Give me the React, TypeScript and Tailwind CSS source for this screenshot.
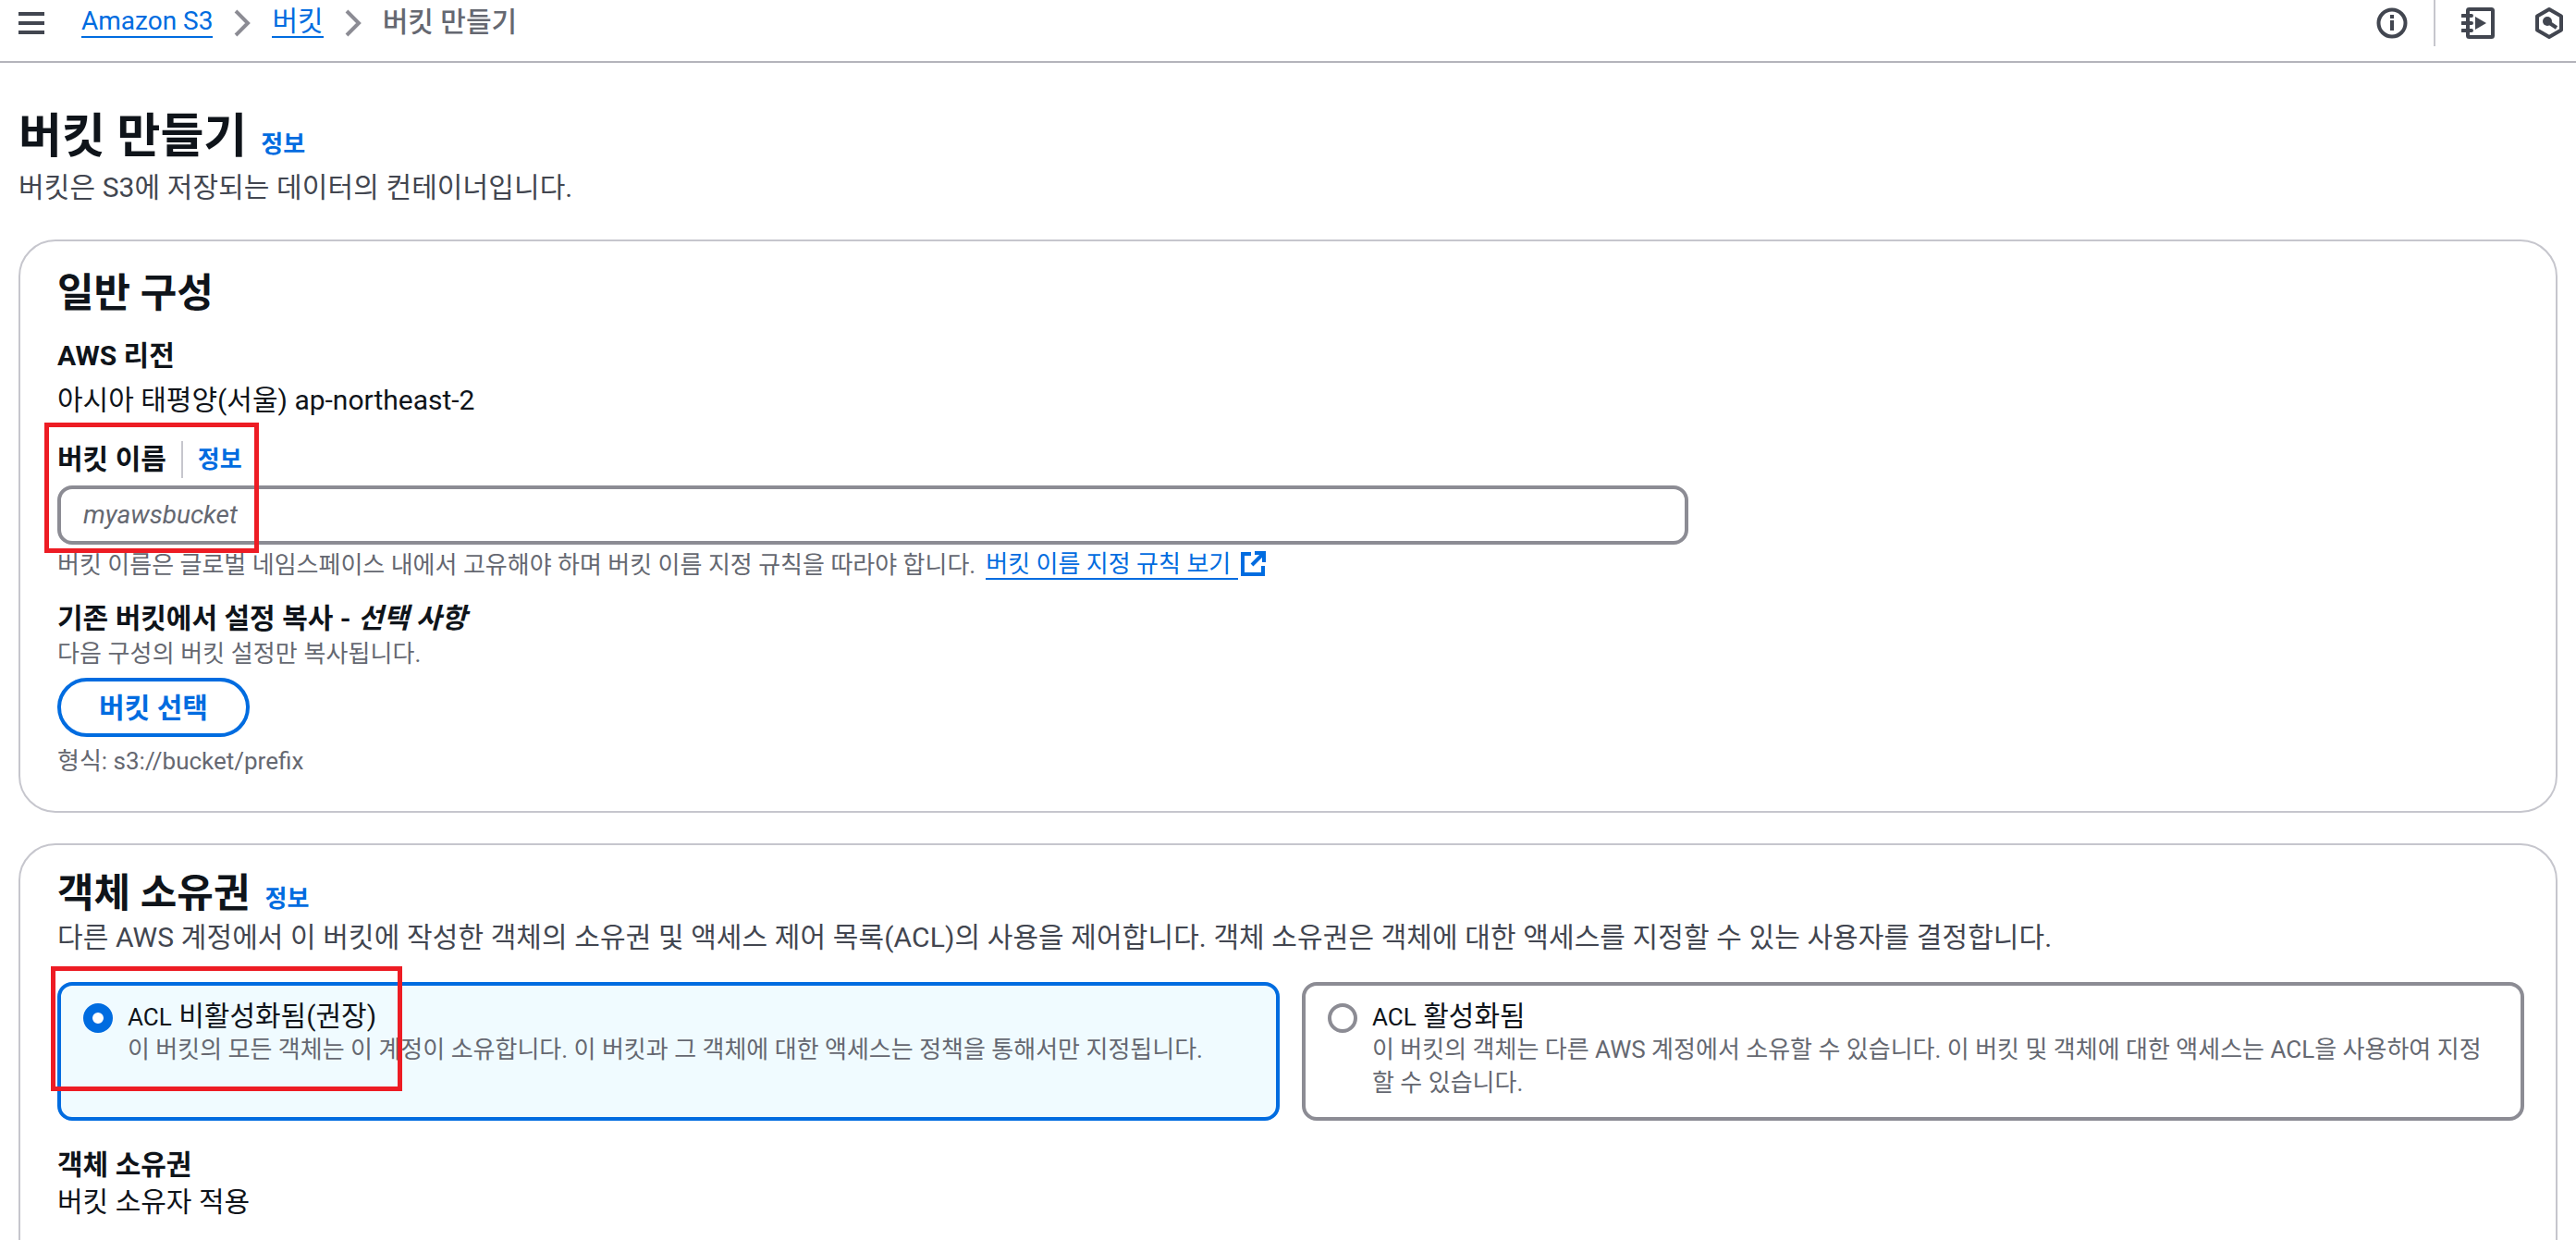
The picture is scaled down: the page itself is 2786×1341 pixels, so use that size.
import React from "react";

const FONT = { fontFamily: 'Roboto, "Noto Sans CJK KR", sans-serif' };

const Chevron = () => (
    <svg width="20" height="32" viewBox="0 0 20 32" className="shrink-0">
        <path d="M3 3l13 13-13 13" fill="none" stroke="#8c8c94" strokeWidth="4" />
    </svg>
);

const Info = ({ className = "" }: { className?: string }) => (
    <span className={`font-bold text-[#006ce0] ${className}`}>정보</span>
);

const RedBox = ({ className }: { className: string }) => (
    <div className={`absolute border-[5px] border-[#ed1c24] pointer-events-none ${className}`} />
);

const TopBar = () => (
    <header className="h-[68px] shrink-0 flex items-start border-b-2 border-[#b4b4bb]">
        <svg width="28" height="24" viewBox="0 0 28 24" className="ml-5 mt-[13px] shrink-0">
            <path d="M0 2h28M0 12h28M0 22h28" stroke="#424650" strokeWidth="4" />
        </svg>
        <nav className="ml-10 flex items-center h-[50px] text-[30px] leading-[36px]">
            <a className="text-[28px] text-[#006ce0] border-b-2 border-[#006ce0] leading-[32px] mt-[-3px]">Amazon S3</a>
            <span className="mx-[22px]"><Chevron /></span>
            <a className="text-[#006ce0] border-b-2 border-[#006ce0] leading-[32px] mt-[-3px]">버킷</a>
            <span className="mx-[22px]"><Chevron /></span>
            <span className="text-[#656871] font-medium mt-[-3px]">버킷 만들기</span>
        </nav>
        <div className="ml-auto flex items-start">
            <svg width="34" height="34" viewBox="0 0 34 34" className="mt-[8px]">
                <circle cx="17" cy="17" r="14.5" fill="none" stroke="#424650" strokeWidth="4" />
                <path d="M17 14v11M17 8v4" stroke="#424650" strokeWidth="4" />
            </svg>
            <div className="ml-[28px] w-[2px] h-[50px] bg-[#c6c6cd]" />
            <svg width="36" height="34" viewBox="0 0 36 34" className="ml-[28px] mt-[8px]">
                <path d="M7 3.5a1.500 1.500 0 0 1 1.500-1.500h24a1.500 1.500 0 0 1 1.500 1.500v27a1.500 1.500 0 0 1-1.500 1.500h-24a1.500 1.500 0 0 1-1.500-1.500z" fill="none" stroke="#424650" strokeWidth="4" />
                <path d="M1 9h10M1 17h10M1 25h10" stroke="#424650" strokeWidth="4" strokeLinecap="round" />
                <path d="M15 10l12 7-12 7z" fill="#424650" />
            </svg>
            <svg width="32" height="36" viewBox="0 0 32 36" className="ml-[43px] mr-[13px] mt-[7px]">
                <path d="M16 3l13 7.500v15L16 33 3 25.500v-15z" fill="none" stroke="#424650" strokeWidth="4" strokeLinejoin="round" />
                <circle cx="14" cy="16" r="5" fill="#424650" />
                <path d="M15 17l9 6" stroke="#424650" strokeWidth="4" />
            </svg>
        </div>
    </header>
);

const Card = ({ className, children }: { className: string; children: React.ReactNode }) => (
    <section className={`relative shrink-0 mx-5 border-2 border-[#c6c6cd] rounded-[40px] px-10 ${className}`}>
        {children}
    </section>
);

const GeneralCard = () => (
    <Card className="h-[620px] mt-[38px] pt-[32px]">
        <h2 className="text-[43px] leading-[48px] font-bold text-[#0f141a]">일반 구성</h2>
        <div className="mt-[26px] text-[30px] leading-[36px] font-bold text-[#0f141a]">AWS 리전</div>
        <div className="mt-[10px] text-[30px] leading-[40px] text-[#0f141a]">아시아 태평양(서울) ap-northeast-2</div>
        <div className="mt-[24px] flex items-center h-[40px]">
            <span className="text-[30px] leading-[36px] font-bold text-[#0f141a]">버킷 이름</span>
            <span className="ml-[16px] w-[2px] h-[40px] bg-[#c6c6cd]" />
            <Info className="ml-[16px] text-[26px] leading-[32px]" />
        </div>
        <div className="mt-[8px] w-[1764px] h-[64px] border-[4px] border-[#8c8c94] rounded-[16px] flex items-center pl-6 text-[28px] italic text-[#656871]">
            myawsbucket
        </div>
        <div className="mt-[4px] flex items-center text-[26px] leading-[36px] text-[#656871]">
            버킷 이름은 글로벌 네임스페이스 내에서 고유해야 하며 버킷 이름 지정 규칙을 따라야 합니다.
            <a className="ml-[11px] text-[#006ce0] border-b-2 border-[#006ce0] leading-[30px] pr-2">버킷 이름 지정 규칙 보기</a>
            <svg width="28" height="28" viewBox="0 0 28 28" className="ml-[2px] mt-[-2px]">
                <path d="M12 3H3v22h22v-9M16 2h10v10M26 2L13 15" fill="none" stroke="#006ce0" strokeWidth="4" />
            </svg>
        </div>
        <div className="mt-[22px] text-[30px] leading-[36px] font-bold text-[#0f141a]">
            기존 버킷에서 설정 복사 - <em>선택 사항</em>
        </div>
        <div className="mt-[2px] text-[26px] leading-[36px] tracking-[0.1px] text-[#656871]">다음 구성의 버킷 설정만 복사됩니다.</div>
        <button className="mt-[8px] w-[208px] h-[64px] border-[4px] border-[#006ce0] rounded-full text-[30px] font-bold text-[#006ce0]">
            버킷 선택
        </button>
        <div className="mt-[8px] text-[26px] leading-[36px] text-[#656871]">형식: s3://bucket/prefix</div>
        <RedBox className="left-[26px] top-[196px] w-[232px] h-[141px]" />
    </Card>
);

const Radio = ({ checked }: { checked?: boolean }) =>
    checked ? (
        <span className="mt-[3px] w-[32px] h-[32px] shrink-0 rounded-full border-[10px] border-[#006ce0] bg-white" />
    ) : (
        <span className="mt-[3px] w-[32px] h-[32px] shrink-0 rounded-full border-[4px] border-[#8c8c94] bg-white" />
    );

const OwnershipOption = ({
    checked,
    title,
    text,
}: {
    checked?: boolean;
    title: string;
    text: string;
}) => (
    <div
        className={`flex-1 h-[150px] rounded-[16px] border-[4px] pt-[16px] pl-[24px] pr-[40px] flex gap-[16px] ${
            checked ? "border-[#006ce0] bg-[#f0fbff]" : "border-[#8c8c94] bg-white"
        }`}
    >
        <Radio checked={checked} />
        <div>
            <div className="text-[30px] leading-[34px] text-[#0f141a]">
                <span className="text-[26px]">ACL</span> {title}
            </div>
            <div className="text-[26px] leading-[36px] text-[#656871]">{text}</div>
        </div>
    </div>
);

const OwnershipCard = () => (
    <Card className="h-[520px] mt-[33px] pt-[28px]">
        <div className="flex items-baseline gap-[16px]">
            <h2 className="text-[43px] leading-[48px] font-bold text-[#0f141a]">객체 소유권</h2>
            <Info className="text-[26px] leading-[32px]" />
        </div>
        <p className="mt-[4px] text-[30px] leading-[40px] tracking-[0.1px] text-[#424650]">
            다른 AWS 계정에서 이 버킷에 작성한 객체의 소유권 및 액세스 제어 목록(ACL)의 사용을 제어합니다. 객체 소유권은 객체에 대한 액세스를 지정할 수 있는 사용자를 결정합니다.
        </p>
        <div className="mt-[28px] flex gap-[24px] w-[2668px]">
            <OwnershipOption
                checked
                title="비활성화됨(권장)"
                text="이 버킷의 모든 객체는 이 계정이 소유합니다. 이 버킷과 그 객체에 대한 액세스는 정책을 통해서만 지정됩니다."
            />
            <OwnershipOption
                title="활성화됨"
                text="이 버킷의 객체는 다른 AWS 계정에서 소유할 수 있습니다. 이 버킷 및 객체에 대한 액세스는 ACL을 사용하여 지정할 수 있습니다."
            />
        </div>
        <div className="mt-[30px] text-[30px] leading-[36px] font-bold text-[#0f141a]">객체 소유권</div>
        <div className="mt-[4px] text-[30px] leading-[36px] text-[#0f141a]">버킷 소유자 적용</div>
        <RedBox className="left-[33px] top-[131px] w-[380px] h-[135px]" />
    </Card>
);

export default function App() {
    return (
        <div className="h-screen overflow-hidden bg-white flex flex-col" style={FONT}>
            <TopBar />
            <div className="px-[20px] pt-[51px]">
                <div className="flex items-baseline gap-[15px]">
                    <h1 className="text-[51px] leading-[58px] font-bold text-[#0f141a]">버킷 만들기</h1>
                    <Info className="text-[26px] leading-[32px]" />
                </div>
                <p className="text-[30px] leading-[36px] tracking-[0.1px] text-[#424650] mt-[8px]">버킷은 S3에 저장되는 데이터의 컨테이너입니다.</p>
            </div>
            <GeneralCard />
            <OwnershipCard />
        </div>
    );
}
